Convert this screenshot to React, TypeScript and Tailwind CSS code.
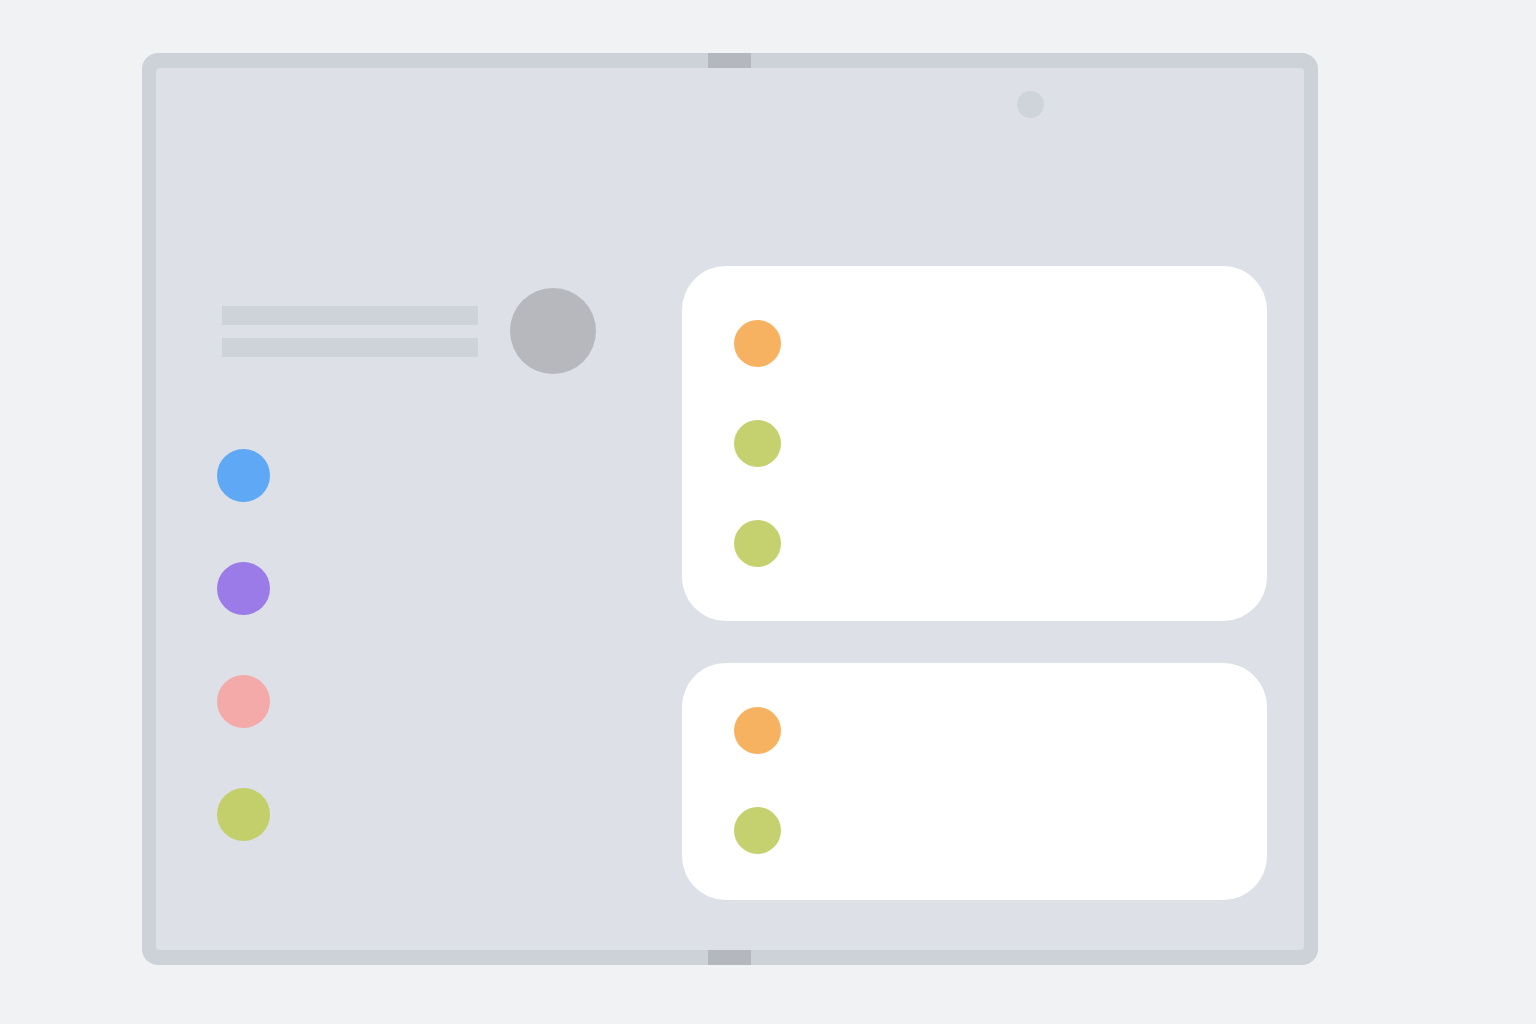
import * as React from "react";

const sideDots = ["bg-[#5ea8f5]", "bg-[#9b7be8]", "bg-[#f4aaa8]", "bg-[#c3cf6a]"];

function Dot({ color, size }: { color: string; size: string }) {
  return <div className={`${size} ${color} shrink-0 rounded-full`} />;
}

function Card({ dots, className }: { dots: string[]; className: string }) {
  return (
    <div className={`flex w-[585px] flex-col gap-[53px] rounded-[44px] bg-white pl-[52px] ${className}`}>
      {dots.map((c, i) => (
        <Dot key={i} color={c} size="h-[47px] w-[47px]" />
      ))}
    </div>
  );
}

export default function App() {
  return (
    <div className="min-h-screen bg-[#f1f2f4] pl-[142px] pt-[53px]" style={{ fontFamily: "Inter, sans-serif" }}>
      <div className="relative h-[912px] w-[1176px] rounded-[16px] bg-[#cdd1d8] px-[14px] py-[15px]">
        <div className="absolute left-[566px] top-0 h-[15px] w-[43px] bg-[#b4b7be]" />
        <div className="absolute bottom-0 left-[566px] h-[15px] w-[43px] bg-[#b4b7be]" />
        <div className="absolute left-[875px] top-[38px] h-[27px] w-[27px] rounded-full bg-[#cfd3da]" />

        <div className="flex h-full rounded-[4px] bg-[#dde0e7]">
          <div className="flex flex-col pl-[61px] pt-[220px]">
            <div className="ml-[5px] flex items-center gap-[32px]">
              <div className="flex flex-col gap-[13px]">
                <div className="h-[19px] w-[256px] bg-[#ced2d9]" />
                <div className="h-[19px] w-[256px] bg-[#ced2d9]" />
              </div>
              <div className="h-[86px] w-[86px] rounded-full bg-[#b6b8bd]" />
            </div>
            <div className="mt-[75px] flex flex-col gap-[60px]">
              {sideDots.map((c, i) => (
                <Dot key={i} color={c} size="h-[53px] w-[53px]" />
              ))}
            </div>
          </div>

          <div className="ml-auto flex flex-col gap-[42px] pr-[37px] pt-[198px]">
            <Card
              dots={["bg-[#f7b261]", "bg-[#c5d16e]", "bg-[#c5d16e]"]}
              className="h-[355px] pt-[54px]"
            />
            <Card dots={["bg-[#f7b261]", "bg-[#c5d16e]"]} className="h-[237px] pt-[44px]" />
          </div>
        </div>
      </div>
    </div>
  );
}
